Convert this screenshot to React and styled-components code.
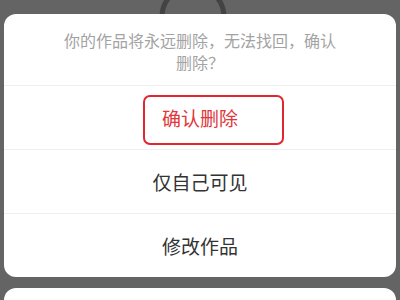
import React from "react";
import styled, { createGlobalStyle } from "styled-components";

const GlobalStyle = createGlobalStyle`
  html, body {
    margin: 0;
    padding: 0;
    background: #646464;
  }
  body {
    font-family: "Noto Sans CJK SC", "Noto Sans", sans-serif;
  }
`;

const Screen = styled.div`
  position: relative;
  width: 400px;
  height: 300px;
  overflow: hidden;
  background: #646464;
  padding: 14px 4px 0;
  box-sizing: border-box;
  display: flex;
  flex-direction: column;
  gap: 11px;
`;

const Ring = styled.svg`
  position: absolute;
  left: 155px;
  top: -21px;
`;

const Sheet = styled.div`
  position: relative;
  background: #fff;
  border-radius: 12px;
  overflow: hidden;
  flex-shrink: 0;
`;

const Title = styled.div`
  padding: 15px 56px 12px;
  font-size: 16px;
  line-height: 22px;
  color: #a3a3a3;
  text-align: center;
  border-bottom: 1px solid #efefef;
`;

const Row = styled.div`
  height: 63px;
  display: flex;
  align-items: center;
  justify-content: center;
  font-size: 19px;
  color: ${({ $danger }) => ($danger ? "#e2363a" : "#333")};
  border-bottom: ${({ $last }) => ($last ? "none" : "1px solid #efefef")};
`;

const Highlight = styled.div`
  position: absolute;
  left: 139px;
  top: 81px;
  width: 141px;
  height: 50px;
  box-sizing: border-box;
  border: 2px solid #e0262e;
  border-radius: 7px;
  pointer-events: none;
`;

const CancelSheet = styled(Sheet)`
  height: 60px;
`;

export default function App() {
  return (
    <>
      <GlobalStyle />
      <Screen>
        <Ring width="76" height="76" viewBox="0 0 76 76">
          <circle cx="38" cy="38" r="31" fill="none" stroke="#434343" strokeWidth="5" />
        </Ring>
        <Sheet>
          <Title>你的作品将永远删除，无法找回，确认删除？</Title>
          <Row $danger>确认删除</Row>
          <Row>仅自己可见</Row>
          <Row $last>修改作品</Row>
          <Highlight />
        </Sheet>
        <CancelSheet />
      </Screen>
    </>
  );
}
